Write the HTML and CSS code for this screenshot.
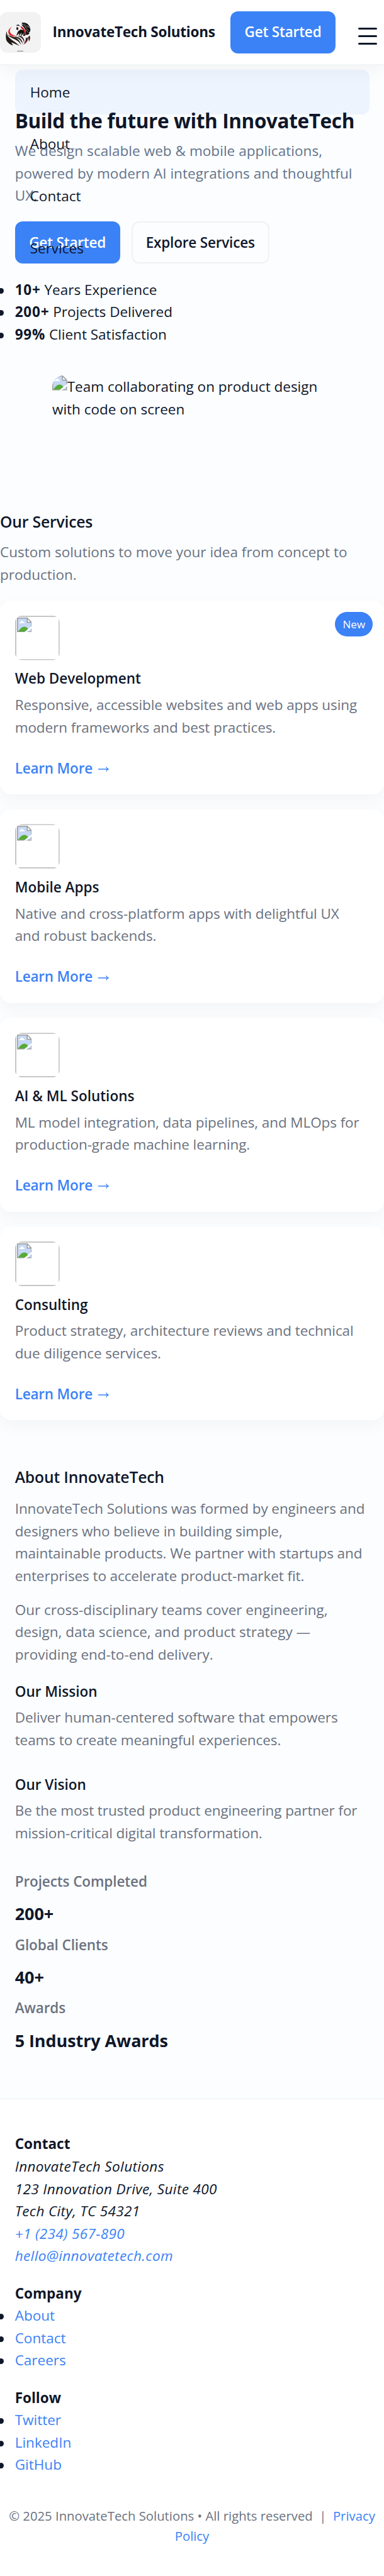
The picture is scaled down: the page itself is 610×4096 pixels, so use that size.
FILE: index.html
```html
<!DOCTYPE html>
<html lang="en">
<head>
<meta charset="utf-8">
<title>InnovateTech Solutions</title>
<link rel="stylesheet" href="styles.css">
</head>
<body>
<svg width="0" height="0" class="defs" aria-hidden="true">
  <symbol id="broken" viewBox="0 0 16 16">
    <path d="M0.5 0.5H11L15.5 5V15.5H0.5Z" fill="#c6d8f5"/>
    <path d="M2.3 6C2.3 4.7 3.6 4.8 4 4.6C4.4 2.6 6.6 2.8 6.9 4.6C8 4.6 8.2 5.4 8 6Z" fill="#fff"/>
    <path d="M1 15.5C3 12 5.5 9.8 8 9.8C9.6 9.8 11 10.8 12 12.5L10 15.5Z" fill="#56ab36"/>
    <path d="M11 0.5V5H15.5Z" fill="#fff"/>
    <path d="M0.5 0.5H11L15.5 5V15.5H0.5ZM11 0.5V5H15.5" fill="none" stroke="#9a9a9a"/>
    <path d="M16.4 8.6L7.2 16.2H10L16.4 11Z" fill="#fff"/>
  </symbol>
</svg>

<header class="header">
  <svg class="logo" viewBox="0 0 116 116">
    <defs><pattern id="check" width="4" height="4" patternUnits="userSpaceOnUse"><rect width="4" height="4" fill="#f7f7f7"/><path d="M0 0h2v2h-2zM2 2h2v2h-2z" fill="#eeeeee"/></pattern></defs>
    <rect width="116" height="116" rx="21" fill="url(#check)"/>
    <path d="M34 43C24 46 21 57 26 64C30 70 39 70 46 68C37 67 29 62 28 55C27 50 30 45 34 43Z" fill="#dd1f22"/>
    <path d="M46 38C51 34 58 35 60 38C67 42 72 51 73 61L66 67L60 58L54 66L47 66L50 57L47 53L52 48L48 44Z" fill="#fafafa"/>
    <path d="M61 31C70 28 81 33 84 42C88 50 86 57 81 60L84 61C79 65 76 66 73 64C75 52 69 43 60 36L65 36Z" fill="#0d0d0d"/>
    <path d="M63 34L75 44M67 33L80 44M71 43L82 54M73 50L80 59M78 38L85 47" stroke="#f4f4f4" stroke-width="1"/>
    <path d="M58 40C68 43 75 54 74 66L71 66C70 57 66 49 60 47ZM59 43L65 45L62 48Z" fill="#dd1f22"/>
    <path d="M46 38L53 36L56 41M48 42L52 46L51 51L46 49M57 50L51 56L47 67L55 59L54 67L62 57L60 68L68 59L66 68L71 67L67 52Z" fill="#111" stroke="#111" stroke-width="1"/>
    <path d="M52 39L55 44L53 48L57 51" fill="none" stroke="#fff" stroke-width="2"/>
    <g fill="#241a19">
      <path d="M20 53C15 65 16 77 20 84C25 90 31 94 37 95L32 86C44 91 51 94 55 96C42 82 28 79 21 66C20 62 19 57 20 53Z"/>
      <path d="M21 63C30 78 50 75 60 94C56 79 47 74 39 71C32 69 25 68 21 63Z"/>
      <path d="M36 72C52 73 59 80 65 92C64 80 56 71 45 70Z"/>
      <path d="M50 69C60 70 68 78 68 89C71 80 66 70 57 68Z"/>
      <path d="M74 71C74 79 71 87 67 92C75 87 79 79 80 70L82 84C86 77 86 73 84 67C79 73 76 75 72 75Z"/>
    </g>
    <path d="M79 71C79 80 73 89 65 93C75 90 82 80 79 71Z" fill="#dd1f22"/>
    <path d="M49 111H66" stroke="#555" stroke-width="2" stroke-dasharray="2 .6"/>
  </svg>
  <span class="brand">InnovateTech Solutions</span>
  <a class="btn btn-primary">Get Started</a>
  <span class="burger"><i></i><i></i><i></i></span>
  <nav class="menu">
    <a class="active">Home</a>
    <a>About</a>
    <a>Contact</a>
    <a>Services</a>
  </nav>
</header>

<main>
  <section class="hero">
    <h1>Build the future with InnovateTech</h1>
    <p class="lead">We design scalable web &amp; mobile applications,<br>powered by modern AI integrations and thoughtful<br>UX.</p>
    <div class="actions">
      <a class="btn btn-primary">Get Started</a>
      <a class="btn btn-outline">Explore Services</a>
    </div>
    <ul class="list facts">
      <li><strong>10+</strong> Years Experience</li>
      <li><strong>200+</strong> Projects Delivered</li>
      <li><strong>99%</strong> Client Satisfaction</li>
    </ul>
    <div class="figure"><svg class="broken"><use href="#broken"/></svg>Team collaborating on product design<br>with code on screen</div>
  </section>

  <section class="services">
    <h2>Our Services</h2>
    <p>Custom solutions to move your idea from concept to<br>production.</p>
    <div class="cards">
      <article class="card">
        <span class="badge">New</span>
        <div class="thumb"><svg class="broken"><use href="#broken"/></svg></div>
        <h3>Web Development</h3>
        <p class="tight">Responsive, accessible websites and web apps using<br>modern frameworks and best practices.</p>
        <a class="more">Learn More <svg class="arrow" viewBox="0 0 17 12"><path d="M0 6H16M12.6 2.5Q13.6 5 16.3 6Q13.6 7 12.6 9.5"/></svg></a>
      </article>
      <article class="card">
        <div class="thumb"><svg class="broken"><use href="#broken"/></svg></div>
        <h3>Mobile Apps</h3>
        <p class="tight">Native and cross-platform apps with delightful UX<br>and robust backends.</p>
        <a class="more">Learn More <svg class="arrow" viewBox="0 0 17 12"><path d="M0 6H16M12.6 2.5Q13.6 5 16.3 6Q13.6 7 12.6 9.5"/></svg></a>
      </article>
      <article class="card">
        <div class="thumb"><svg class="broken"><use href="#broken"/></svg></div>
        <h3>AI &amp; ML Solutions</h3>
        <p class="tight">ML model integration, data pipelines, and MLOps for<br>production-grade machine learning.</p>
        <a class="more">Learn More <svg class="arrow" viewBox="0 0 17 12"><path d="M0 6H16M12.6 2.5Q13.6 5 16.3 6Q13.6 7 12.6 9.5"/></svg></a>
      </article>
      <article class="card">
        <div class="thumb"><svg class="broken"><use href="#broken"/></svg></div>
        <h3>Consulting</h3>
        <p class="tight">Product strategy, architecture reviews and technical<br>due diligence services.</p>
        <a class="more">Learn More <svg class="arrow" viewBox="0 0 17 12"><path d="M0 6H16M12.6 2.5Q13.6 5 16.3 6Q13.6 7 12.6 9.5"/></svg></a>
      </article>
    </div>
  </section>

  <section class="about">
    <h2>About InnovateTech</h2>
    <p class="tight">InnovateTech Solutions was formed by engineers and<br>designers who believe in building simple,<br>maintainable products. We partner with startups and<br>enterprises to accelerate product-market fit.</p>
    <p class="second">Our cross-disciplinary teams cover engineering,<br>design, data science, and product strategy —<br>providing end-to-end delivery.</p>
    <h3>Our Mission</h3>
    <p class="tight">Deliver human-centered software that empowers<br>teams to create meaningful experiences.</p>
    <h3 class="vision">Our Vision</h3>
    <p class="tight">Be the most trusted product engineering partner for<br>mission-critical digital transformation.</p>
    <dl class="stats">
      <dt>Projects Completed</dt><dd>200+</dd>
      <dt>Global Clients</dt><dd>40+</dd>
      <dt>Awards</dt><dd>5 Industry Awards</dd>
    </dl>
  </section>
</main>

<footer class="footer">
  <div>
    <strong>Contact</strong>
    <address>InnovateTech Solutions<br>123 Innovation Drive, Suite 400<br>Tech City, TC 54321<br><a>+1 (234) 567-890</a><br><a>hello@innovatetech.com</a></address>
  </div>
  <div>
    <strong>Company</strong>
    <ul class="list"><li><a>About</a></li><li><a>Contact</a></li><li><a>Careers</a></li></ul>
  </div>
  <div>
    <strong>Follow</strong>
    <ul class="list"><li><a>Twitter</a></li><li><a>LinkedIn</a></li><li><a>GitHub</a></li></ul>
  </div>
  <p class="copy">© 2025 InnovateTech Solutions • All rights reserved &nbsp;|&nbsp; <a>Privacy<br>Policy</a></p>
</footer>
</body>
</html>
```
FILE: styles.css
```css
* { box-sizing: border-box; margin: 0; padding: 0; }
html { overflow: hidden; }
body {
  width: 610px;
  height: 4096px;
  overflow: hidden;
  background: #fbfdff;
  color: #0f172a;
  font-family: "Open Sans", "Noto Sans", sans-serif;
  font-size: 22.5px;
  line-height: 35.54px;
}
.defs { position: absolute; }
a { color: #3b82f6; text-decoration: none; }
ul { list-style: none; }
p { color: #6b7280; white-space: nowrap; }
.tight { letter-spacing: -0.09px; }
h2 { font-size: 24.7px; font-weight: 600; line-height: 40px; letter-spacing: -0.17px; }
h3 { font-size: 22.5px; font-weight: 600; }

/* Header */
.header {
  position: relative;
  display: flex;
  align-items: center;
  height: 103.5px;
  padding-top: 1px;
  background: #fff;
  border-bottom: 2px solid #f3f4f5;
  box-shadow: 0 9px 27px rgba(2, 6, 23, .04);
  white-space: nowrap;
}
.logo { width: 65px; height: 65px; flex: none; }
.brand { width: 264px; margin-left: 18.5px; font-weight: 700; letter-spacing: -0.24px; }
.btn {
  display: flex;
  align-items: center;
  justify-content: center;
  height: 66.5px;
  border-radius: 12px;
  font-weight: 600;
  letter-spacing: -0.18px;
}
.btn-primary { width: 167px; background: #3b82f6; color: #fff; }
.btn-outline { width: 219px; border: 2px solid #f0f1f3; color: #0f172a; }
.header .btn { margin-left: 18.5px; }
.burger { display: flex; flex-direction: column; gap: 8.8px; width: 30px; margin-left: 35.5px; padding-top: 13px; }
.burger i { height: 3px; border-radius: 2px; background: #0f172a; }
.menu {
  position: absolute;
  top: 110.6px;
  left: 23.7px;
  display: flex;
  flex-direction: column;
  gap: 11.1px;
  width: 563px;
}
.menu a { padding: 18.05px 24px; border-radius: 12px; color: #0f172a; }
.menu .active { background: rgba(59, 130, 246, .07); }

/* Hero */
.hero { padding: 68.5px 23.7px 0; }
.hero h1 { font-size: 31.5px; line-height: 40px; font-weight: 700; letter-spacing: -0.38px; white-space: nowrap; }
.lead { margin-top: 10px; color: #64748b; letter-spacing: 0.05px; }
.actions { display: flex; gap: 18px; margin-top: 23.8px; }
.list li { position: relative; }
.list li::before {
  content: "";
  position: absolute;
  left: -26.7px;
  top: 15px;
  width: 9px;
  height: 9px;
  border-radius: 50%;
  background: #0f172a;
}
.facts { margin-top: 23.7px; }
.facts strong { letter-spacing: 0.8px; }
.figure { height: 212.7px; margin: 47.6px 0 0 59.3px; white-space: nowrap; }
.broken { width: 23.7px; height: 23.7px; }
.figure .broken { vertical-align: 2.7px; border-top-left-radius: 18px; }

/* Services */
.services h2 + p { margin-top: 10.7px; }
.cards { display: grid; gap: 23.6px; margin-top: 23.6px; }
.card {
  position: relative;
  height: 308.2px;
  padding: 23.7px;
  border-radius: 18px;
  background: #fff;
  box-shadow: 0 9px 27px rgba(2, 6, 23, .04);
}
.badge {
  position: absolute;
  top: 17.7px;
  right: 17.7px;
  width: 60px;
  height: 39px;
  border-radius: 20px;
  background: #3b82f6;
  color: #fff;
  font-size: 17px;
  line-height: 39px;
  text-align: center;
  letter-spacing: 0.1px;
}
.thumb {
  display: flex;
  width: 71px;
  height: 71px;
  padding: 1px;
  border: 2px solid #c6c6c6;
  clip-path: inset(0 round 12px);
}
.card h3 { margin-top: 11.7px; }
.card p { margin-top: 6.2px; }
.more { display: block; margin-top: 29.5px; font-weight: 600; letter-spacing: -0.2px; }
.arrow { width: 17px; height: 12px; margin-left: 3px; vertical-align: 0.8px; fill: none; stroke: #3b82f6; stroke-width: 1.3; }

/* About */
.about { padding: 70.7px 23.7px 0; }
.about h2 + p { margin-top: 12px; }
.second { margin-top: 18.5px; }
.about h3 { margin-top: 23.6px; }
.about h3 + p { margin-top: 5.6px; }
.about .vision { margin-top: 35.8px; }
.stats { margin-top: 41.4px; }
.stats dt { color: #6b7280; font-weight: 600; letter-spacing: -0.1px; }
.stats dd { margin: 12.8px 0 10.5px; font-size: 27px; line-height: 42px; font-weight: 700; letter-spacing: -0.08px; }

/* Footer */
.footer {
  margin-top: 70.7px;
  padding: 53px 23.7px 0;
  height: 760px;
  border-top: 2px solid #f5f6f7;
  background: #fff;
}
.footer div { margin-bottom: 23.8px; }
.footer strong { display: block; }
address { letter-spacing: 0.37px; }
.copy {
  margin: 48.3px -20px 0;
  font-size: 20.3px;
  line-height: 31.9px;
  text-align: center;
}
```
